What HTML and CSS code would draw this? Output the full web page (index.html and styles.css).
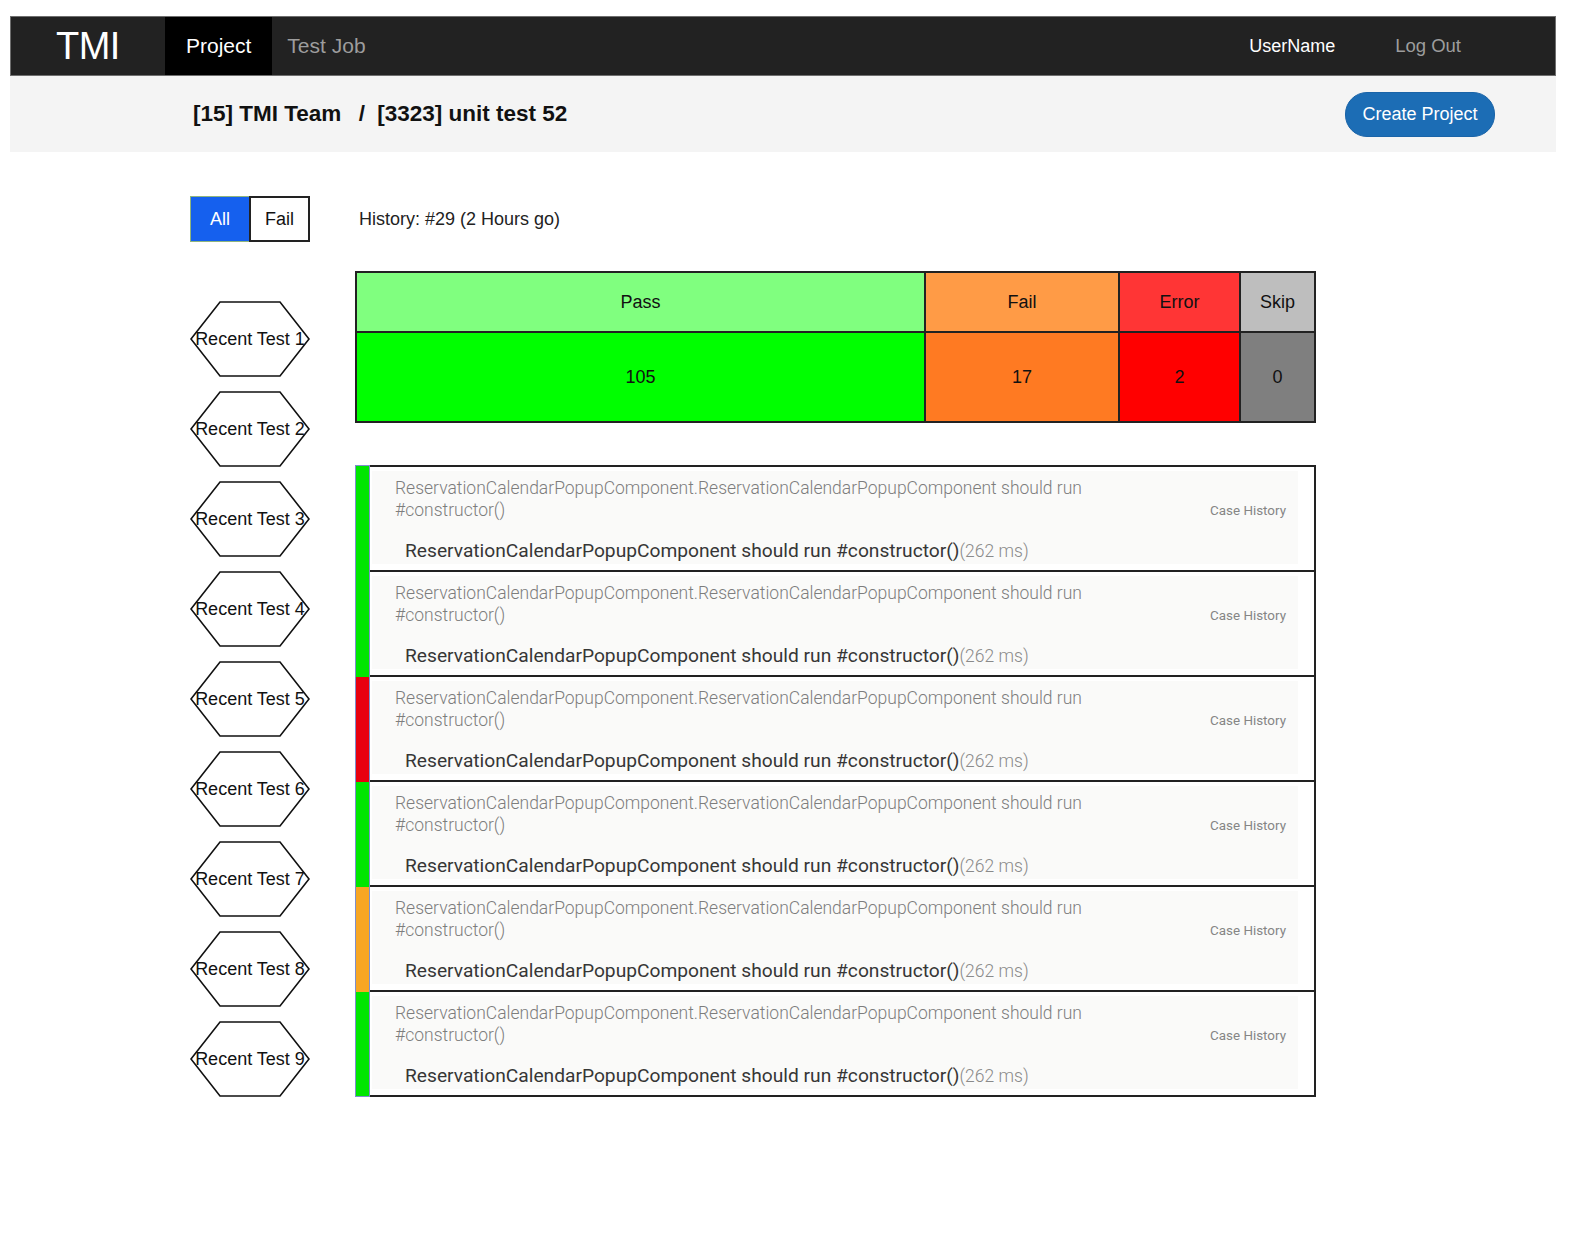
FILE: index.html
```html
<!DOCTYPE html>
<html lang="en">
<head>
<meta charset="utf-8">
<title>TMI</title>
<link rel="stylesheet" href="styles.css">
</head>
<body>
<nav class="navbar">
  <div class="brand">TMI</div>
  <a class="nav-link active">Project</a>
  <a class="nav-link">Test Job</a>
  <div class="nav-right">
    <a class="nav-user">UserName</a>
    <a class="nav-link">Log Out</a>
  </div>
</nav>
<header class="subheader">
  <h1 class="crumbs">[15] TMI Team <span class="sep">/</span> [3323] unit test 52</h1>
  <button class="btn-create">Create Project</button>
</header>
<main class="main">
  <div class="top-row">
    <div class="toggle">
      <span class="toggle-btn on">All</span>
      <span class="toggle-btn">Fail</span>
    </div>
    <div class="history">History: #29 (2 Hours go)</div>
  </div>
  <div class="body-row">
    <aside class="recent">
      <div class="hex"><svg class="hex-shape" viewBox="0 0 120 76" width="120" height="76"><polygon points="1,38 30,1 90,1 119,38 90,75 30,75" fill="none" stroke="#111" stroke-width="1.6"/></svg><span class="hex-label">Recent Test 1</span></div>
      <div class="hex"><svg class="hex-shape" viewBox="0 0 120 76" width="120" height="76"><polygon points="1,38 30,1 90,1 119,38 90,75 30,75" fill="none" stroke="#111" stroke-width="1.6"/></svg><span class="hex-label">Recent Test 2</span></div>
      <div class="hex"><svg class="hex-shape" viewBox="0 0 120 76" width="120" height="76"><polygon points="1,38 30,1 90,1 119,38 90,75 30,75" fill="none" stroke="#111" stroke-width="1.6"/></svg><span class="hex-label">Recent Test 3</span></div>
      <div class="hex"><svg class="hex-shape" viewBox="0 0 120 76" width="120" height="76"><polygon points="1,38 30,1 90,1 119,38 90,75 30,75" fill="none" stroke="#111" stroke-width="1.6"/></svg><span class="hex-label">Recent Test 4</span></div>
      <div class="hex"><svg class="hex-shape" viewBox="0 0 120 76" width="120" height="76"><polygon points="1,38 30,1 90,1 119,38 90,75 30,75" fill="none" stroke="#111" stroke-width="1.6"/></svg><span class="hex-label">Recent Test 5</span></div>
      <div class="hex"><svg class="hex-shape" viewBox="0 0 120 76" width="120" height="76"><polygon points="1,38 30,1 90,1 119,38 90,75 30,75" fill="none" stroke="#111" stroke-width="1.6"/></svg><span class="hex-label">Recent Test 6</span></div>
      <div class="hex"><svg class="hex-shape" viewBox="0 0 120 76" width="120" height="76"><polygon points="1,38 30,1 90,1 119,38 90,75 30,75" fill="none" stroke="#111" stroke-width="1.6"/></svg><span class="hex-label">Recent Test 7</span></div>
      <div class="hex"><svg class="hex-shape" viewBox="0 0 120 76" width="120" height="76"><polygon points="1,38 30,1 90,1 119,38 90,75 30,75" fill="none" stroke="#111" stroke-width="1.6"/></svg><span class="hex-label">Recent Test 8</span></div>
      <div class="hex"><svg class="hex-shape" viewBox="0 0 120 76" width="120" height="76"><polygon points="1,38 30,1 90,1 119,38 90,75 30,75" fill="none" stroke="#111" stroke-width="1.6"/></svg><span class="hex-label">Recent Test 9</span></div>
    </aside>
    <section class="results">
      <table class="stats">
        <thead>
          <tr>
            <th class="c-pass">Pass</th>
            <th class="c-fail">Fail</th>
            <th class="c-error">Error</th>
            <th class="c-skip">Skip</th>
          </tr>
        </thead>
        <tbody>
          <tr>
            <td class="c-pass">105</td>
            <td class="c-fail">17</td>
            <td class="c-error">2</td>
            <td class="c-skip">0</td>
          </tr>
        </tbody>
      </table>
      <div class="cases">
        <div class="case"><div class="bar pass"></div><div class="case-body"><div class="case-inner">
          <div class="case-top"><div class="case-desc">ReservationCalendarPopupComponent.ReservationCalendarPopupComponent should run #constructor()</div><div class="case-link">Case History</div></div>
          <div class="case-title">ReservationCalendarPopupComponent should run #constructor()<span class="case-time">(262 ms)</span></div>
        </div></div></div>
        <div class="case"><div class="bar pass"></div><div class="case-body"><div class="case-inner">
          <div class="case-top"><div class="case-desc">ReservationCalendarPopupComponent.ReservationCalendarPopupComponent should run #constructor()</div><div class="case-link">Case History</div></div>
          <div class="case-title">ReservationCalendarPopupComponent should run #constructor()<span class="case-time">(262 ms)</span></div>
        </div></div></div>
        <div class="case"><div class="bar error"></div><div class="case-body"><div class="case-inner">
          <div class="case-top"><div class="case-desc">ReservationCalendarPopupComponent.ReservationCalendarPopupComponent should run #constructor()</div><div class="case-link">Case History</div></div>
          <div class="case-title">ReservationCalendarPopupComponent should run #constructor()<span class="case-time">(262 ms)</span></div>
        </div></div></div>
        <div class="case"><div class="bar pass"></div><div class="case-body"><div class="case-inner">
          <div class="case-top"><div class="case-desc">ReservationCalendarPopupComponent.ReservationCalendarPopupComponent should run #constructor()</div><div class="case-link">Case History</div></div>
          <div class="case-title">ReservationCalendarPopupComponent should run #constructor()<span class="case-time">(262 ms)</span></div>
        </div></div></div>
        <div class="case"><div class="bar fail"></div><div class="case-body"><div class="case-inner">
          <div class="case-top"><div class="case-desc">ReservationCalendarPopupComponent.ReservationCalendarPopupComponent should run #constructor()</div><div class="case-link">Case History</div></div>
          <div class="case-title">ReservationCalendarPopupComponent should run #constructor()<span class="case-time">(262 ms)</span></div>
        </div></div></div>
        <div class="case"><div class="bar pass"></div><div class="case-body"><div class="case-inner">
          <div class="case-top"><div class="case-desc">ReservationCalendarPopupComponent.ReservationCalendarPopupComponent should run #constructor()</div><div class="case-link">Case History</div></div>
          <div class="case-title">ReservationCalendarPopupComponent should run #constructor()<span class="case-time">(262 ms)</span></div>
        </div></div></div>
      </div>
    </section>
  </div>
</main>
</body>
</html>
```
FILE: styles.css
```css
* { box-sizing: border-box; }

body {
  margin: 16px 14px 0 10px;
  font-family: "Liberation Sans", Arial, sans-serif;
  color: #222;
  background: #fff;
}

/* ---------- navbar ---------- */
.navbar {
  display: flex;
  align-items: stretch;
  height: 60px;
  background: #222;
  border: 1px solid #6e6e6e;
}
.brand {
  display: flex;
  align-items: center;
  width: 154px;
  padding-left: 45px;
  font-size: 38px;
  color: #fff;
  letter-spacing: -0.5px;
}
.nav-link {
  display: flex;
  align-items: center;
  padding: 0 15px;
  font-size: 21px;
  color: #9d9d9d;
}
.nav-link.active {
  padding: 0 21px 0 21px;
  background: #000;
  color: #fff;
}
.nav-right {
  margin-left: auto;
  display: flex;
  align-items: stretch;
  padding-right: 79px;
}
.nav-user {
  display: flex;
  align-items: center;
  padding-right: 45px;
  font-size: 18px;
  color: #fff;
}
.nav-right .nav-link { font-size: 18.5px; }

/* ---------- subheader ---------- */
.subheader {
  display: flex;
  align-items: center;
  height: 76px;
  padding: 0 61px 0 183px;
  background: #f4f4f4;
}
.crumbs {
  margin: 0;
  font-size: 22.5px;
  font-weight: bold;
  color: #111;
}
.crumbs .sep { margin: 0 6px 0 11px; }
.btn-create {
  margin-left: auto;
  width: 150px;
  height: 45px;
  border: 1px solid #1a64a8;
  border-radius: 22px;
  background: #1c6db5;
  color: #fff;
  font-family: "Liberation Sans", Arial, sans-serif;
  font-size: 18px;
}

/* ---------- main ---------- */
.main {
  padding: 44px 0 0 180px;
}
.top-row {
  display: flex;
  align-items: center;
  height: 46px;
}
.toggle {
  display: flex;
  width: 120px;
  height: 46px;
}
.toggle-btn {
  display: flex;
  align-items: center;
  justify-content: center;
  font-size: 18px;
}
.toggle-btn.on {
  width: 59px;
  background: #1560ee;
  color: #fff;
  border: 1px solid #8fb57c;
  border-right: none;
}
.toggle-btn:not(.on) {
  width: 61px;
  border: 2px solid #222;
  color: #111;
}
.history {
  margin-left: 49px;
  font-size: 18px;
  color: #222;
}

.body-row {
  display: flex;
  gap: 45px;
  margin-top: 29px;
}

/* ---------- recent hexagons ---------- */
.recent {
  display: flex;
  flex-direction: column;
  gap: 14px;
  width: 120px;
  padding-top: 30px;
}
.hex {
  position: relative;
  width: 120px;
  height: 76px;
  display: flex;
  align-items: center;
  justify-content: center;
}
.hex-shape {
  position: absolute;
  left: 0;
  top: 0;
}
.hex-label {
  position: relative;
  font-size: 18px;
  color: #111;
  white-space: nowrap;
}

/* ---------- stats table ---------- */
.results { width: 961px; }
.stats {
  width: 959px;
  border-collapse: collapse;
  table-layout: fixed;
  font-size: 18px;
  color: #111;
}
.stats th, .stats td {
  border: 2px solid #222;
  text-align: center;
  font-weight: normal;
}
.stats th { height: 60px; }
.stats td { height: 90px; }
.stats .c-pass { width: 569px; }
.stats .c-fail { width: 194px; }
.stats .c-error { width: 121px; }
.stats .c-skip { width: 75px; }
th.c-pass { background: #80ff7f; }
th.c-fail { background: #ff9b46; }
th.c-error { background: #ff3535; }
th.c-skip { background: #bebebe; }
td.c-pass { background: #00ff00; }
td.c-fail { background: #ff7a22; }
td.c-error { background: #ff0000; }
td.c-skip { background: #7f7f7f; }

/* ---------- cases ---------- */
.cases {
  width: 961px;
  margin-top: 42px;
}
.case {
  display: flex;
  height: 105px;
}
.case:first-child { height: 107px; }
.bar {
  width: 15px;
  flex: none;
  border-left: 1px solid #7d8fcc;
  border-right: 1px solid #7d8fcc;
}
.case:first-child .bar { border-top: 1px solid #7d8fcc; }
.case:last-child .bar { border-bottom: 1px solid #7d8fcc; }
.bar.pass { background: #00e600; }
.bar.error { background: #e8000f; }
.bar.fail { background: #f7a623; }
.case-body {
  flex: 1;
  border-right: 2px solid #222;
  border-bottom: 2px solid #222;
  padding: 4px 16px 6px 2px;
}
.case:first-child .case-body { border-top: 2px solid #222; }
.case-inner {
  height: 100%;
  background: #fafaf9;
  padding: 6px 12px 0 23px;
  font-family: Roboto, "Liberation Sans", sans-serif;
}
.case-top {
  display: flex;
  align-items: center;
}
.case-desc {
  width: 720px;
  font-size: 17.5px;
  font-weight: 300;
  line-height: 22px;
  color: #7d7d7d;
}
.case-link {
  margin-left: auto;
  padding-top: 22px;
  font-size: 13.4px;
  color: #858585;
}
.case-title {
  margin-top: 18px;
  padding-left: 10px;
  font-size: 19.2px;
  color: #363636;
}
.case-time {
  font-size: 17.5px;
  font-weight: 300;
  color: #8a8a8a;
}
```
